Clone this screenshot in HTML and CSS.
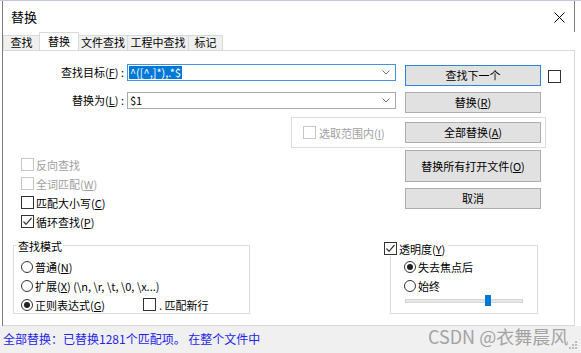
FILE: index.html
```html
<!DOCTYPE html>
<html>
<head>
<meta charset="utf-8">
<link rel="stylesheet" href="styles.css">
</head>
<body>
<div class="win">
  <div class="frame">
    <div class="titlebar">
      <span class="title">替换</span>
      <svg class="close" width="11" height="11" viewBox="0 0 11 11"><path d="M0.5 0.5L10.5 10.5M10.5 0.5L0.5 10.5" stroke="#000" stroke-width="1" fill="none"/></svg>
    </div>
    <div class="tabs">
      <div class="tab t1">查找</div>
      <div class="tab sel t2">替换</div>
      <div class="tab t3">文件查找</div>
      <div class="tab t4">工程中查找</div>
      <div class="tab t5">标记</div>
    </div>
    <div class="panel">
      <div class="row rowA">
        <div class="lbl">查找目标(<u>F</u>) :</div>
        <div class="combo focus"><span class="val hl">^([^,]*),.*$</span><svg class="chev" width="8" height="5" viewBox="0 0 8 5"><path d="M0.5 0.5L4 4L7.5 0.5" stroke="#6d6d6d" fill="none"/></svg></div>
        <button class="btn def">查找下一个</button>
        <span class="cb"></span>
      </div>
      <div class="row rowB">
        <div class="lbl">替换为(<u>L</u>) :</div>
        <div class="combo"><span class="val">$1</span><svg class="chev" width="8" height="5" viewBox="0 0 8 5"><path d="M0.5 0.5L4 4L7.5 0.5" stroke="#6d6d6d" fill="none"/></svg></div>
        <button class="btn">替换(<u>R</u>)</button>
      </div>
      <div class="rowC">
        <div class="scope">
          <span class="cb dis"></span>
          <span class="distext">选取范围内(<u>I</u>)</span>
          <button class="btn">全部替换(<u>A</u>)</button>
        </div>
      </div>
      <div class="middle">
        <div class="opts">
          <div class="opt dis"><span class="cb"></span>反向查找</div>
          <div class="opt dis"><span class="cb"></span>全词匹配(<u>W</u>)</div>
          <div class="opt"><span class="cb"></span>匹配大小写(<u>C</u>)</div>
          <div class="opt"><span class="cb"><svg width="11" height="11" viewBox="0 0 11 11"><path d="M1.5 5.5L4 8.3L9.5 2" fill="none" stroke="#333" stroke-width="1.2"/></svg></span>循环查找(<u>P</u>)</div>
        </div>
        <div class="btncol">
          <button class="btn tall">替换所有打开文件(<u>O</u>)</button>
          <button class="btn">取消</button>
        </div>
      </div>
      <div class="bottom">
        <div class="grp mode">
          <span class="legend">查找模式</span>
          <div class="rrow"><span class="rb"></span>普通(<u>N</u>)</div>
          <div class="rrow"><span class="rb"></span>扩展(<u>X</u>) (\n, \r, \t, \0, \x...)</div>
          <div class="rrow"><span class="rb on"></span><span class="rxlbl">正则表达式(<u>G</u>)</span><span class="cb"></span><span class="nl">. 匹配新行</span></div>
        </div>
        <div class="grp trans">
          <span class="tlegend"><span class="cb"><svg width="11" height="11" viewBox="0 0 11 11"><path d="M1.5 5.5L4 8.3L9.5 2" fill="none" stroke="#333" stroke-width="1.2"/></svg></span>透明度(<u>Y</u>)</span>
          <div class="rrow"><span class="rb on"></span>失去焦点后</div>
          <div class="rrow"><span class="rb"></span>始终</div>
          <div class="slider"><span class="track"></span><span class="thumb"></span></div>
        </div>
      </div>
    </div>
  </div>
  <div class="status">全部替换：已替换1281个匹配项。 在整个文件中</div>
  <div class="wm">CSDN @衣舞晨风</div>
  <svg class="grip" width="8" height="8" viewBox="0 0 8 8"><rect x="6" y="0" width="2" height="2" fill="#bdbdbd"/><rect x="3" y="3" width="2" height="2" fill="#bdbdbd"/><rect x="6" y="3" width="2" height="2" fill="#bdbdbd"/><rect x="0" y="6" width="2" height="2" fill="#bdbdbd"/><rect x="3" y="6" width="2" height="2" fill="#bdbdbd"/><rect x="6" y="6" width="2" height="2" fill="#bdbdbd"/></svg>
</div>
</body>
</html>
```
FILE: styles.css
```css
* { box-sizing: border-box; }
html, body { margin: 0; padding: 0; }
body {
  width: 581px;
  height: 353px;
  overflow: hidden;
  background: #fff;
  font-family: "Noto Sans CJK SC", "Noto Sans", sans-serif;
  font-size: 11px;
  color: #000;
}
u { text-decoration: underline; text-underline-offset: 1px; }
.win {
  position: relative;
  width: 581px;
  height: 353px;
  border-top: 1px solid #c5c8dd;
}
.frame {
  margin-left: 2px;
  width: 573px;
  border-left: 1px solid #7d7d7d;
}
.titlebar {
  height: 31px;
  display: flex;
  align-items: center;
  justify-content: space-between;
  padding: 0 9px 0 8px;
  border-right: 1px solid #7d7d7d;
}
.title { font-size: 13px; line-height: 16px; margin-top: 1px; }
.close { display: block; margin-top: 1px; }
.tabs {
  height: 18px;
  display: flex;
  align-items: flex-end;
}
.tab {
  height: 15px;
  border: 1px solid #d9d9d9;
  border-bottom: 0;
  background: #f0f0f0;
  line-height: 13px;
  text-align: center;
  margin-right: -1px;
  white-space: nowrap;
}
.tab.sel {
  height: 18px;
  background: #fff;
  line-height: 17px;
  position: relative;
  z-index: 1;
}
.t1 { width: 37px; }
.t2 { width: 40px; }
.t3 { width: 50px; }
.t4 { width: 62px; }
.t5 { width: 35px; }
.panel {
  height: 276px;
  border: 1px solid #d9d9d9;
  border-left: 0;
  display: flex;
  flex-direction: column;
}
.row { display: flex; align-items: flex-start; }
.rowA { margin-top: 13px; }
.rowB { margin-top: 6px; }
.lbl {
  width: 121px;
  height: 17px;
  line-height: 17px;
  text-align: right;
  white-space: nowrap;
}
.combo {
  margin-left: 3px;
  width: 269px;
  height: 17px;
  border: 1px solid #a9a9a9;
  display: flex;
  align-items: center;
  justify-content: space-between;
  padding: 0 5px 0 1px;
}
.combo.focus { border-color: #4592de; }
.val { line-height: 13px; padding: 0 1px; white-space: nowrap; }
.hl { background: #0078d7; color: #fff; }
.chev { display: block; }
.btn {
  font-family: inherit;
  font-size: 11px;
  color: #000;
  width: 136px;
  height: 21px;
  padding: 0;
  background: #e1e1e1;
  border: 1px solid #adadad;
  line-height: 17px;
  white-space: nowrap;
}
.btn.def { border-color: #2b86d9; }
.btn.tall { height: 32px; }
.rowA .btn { margin-left: 9px; margin-top: 1px; }
.rowB .btn { margin-left: 9px; }
.rowA .cb { margin-left: 7px; margin-top: 6px; }
.cb {
  width: 13px;
  height: 13px;
  border: 1px solid #333;
  background: #fff;
  display: inline-flex;
  flex: none;
}
.cb svg { display: block; }
.cb.dis, .dis .cb { border-color: #c6c6c6; }
.rowC { margin-top: 4px; padding-left: 288px; }
.scope {
  width: 255px;
  height: 31px;
  border: 1px solid #dcdcdc;
  display: flex;
  align-items: center;
  padding: 0 4px 0 11px;
}
.distext { color: #a0a0a0; margin-left: 3px; white-space: nowrap; }
.scope .btn { margin-left: auto; }
.middle {
  display: flex;
  justify-content: space-between;
  margin-top: 2px;
  padding-right: 33px;
}
.opts { padding: 5px 0 0 18px; }
.opt {
  display: flex;
  align-items: center;
  height: 19px;
  white-space: nowrap;
}
.opt .cb { margin-right: 2px; }
.opt.dis { color: #a0a0a0; }
.btncol { display: flex; flex-direction: column; gap: 6px; }
.bottom { display: flex; margin-top: 14px; }
.grp {
  position: relative;
  border: 1px solid #dcdcdc;
  height: 69px;
}
.mode { margin-left: 10px; width: 237px; padding: 11px 0 0 7px; }
.trans { margin-left: 140px; width: 148px; padding: 11px 0 0 13px; }
.legend {
  position: absolute;
  left: 3px;
  top: -8px;
  background: #fff;
  padding: 0 1px;
  line-height: 16px;
}
.tlegend {
  position: absolute;
  left: -8px;
  top: -5px;
  height: 15px;
  display: flex;
  align-items: center;
  background: #fff;
  padding: 0 3px 0 1px;
  white-space: nowrap;
}
.tlegend .cb { margin-right: 2px; }
.rrow {
  display: flex;
  align-items: center;
  height: 19px;
  white-space: nowrap;
}
.rb {
  width: 12px;
  height: 12px;
  border: 1px solid #333;
  border-radius: 50%;
  margin-right: 2px;
  display: flex;
  align-items: center;
  justify-content: center;
  flex: none;
}
.rb.on::after {
  content: "";
  width: 6px;
  height: 6px;
  border-radius: 50%;
  background: #222;
}
.rxlbl { width: 108px; }
.nl { margin-left: 3px; }
.slider {
  position: relative;
  margin: 0 0 0 1px;
  width: 118px;
  height: 12px;
}
.track {
  position: absolute;
  left: 0;
  right: 0;
  top: 4px;
  height: 4px;
  background: #e7e7e7;
  border: 1px solid #d6d6d6;
}
.thumb {
  position: absolute;
  left: 80px;
  top: 0;
  width: 6px;
  height: 11px;
  background: #0078d7;
}
.status {
  height: 27px;
  background: #f0f0f0;
  color: #2424e6;
  font-size: 12px;
  line-height: 25px;
  padding-left: 3px;
  white-space: nowrap;
}
.wm {
  position: absolute;
  left: 428px;
  top: 325px;
  font-size: 18px;
  line-height: 21px;
  color: #a3a3a3;
  white-space: nowrap;
}
.grip { position: absolute; left: 569px; top: 340px; }
```
